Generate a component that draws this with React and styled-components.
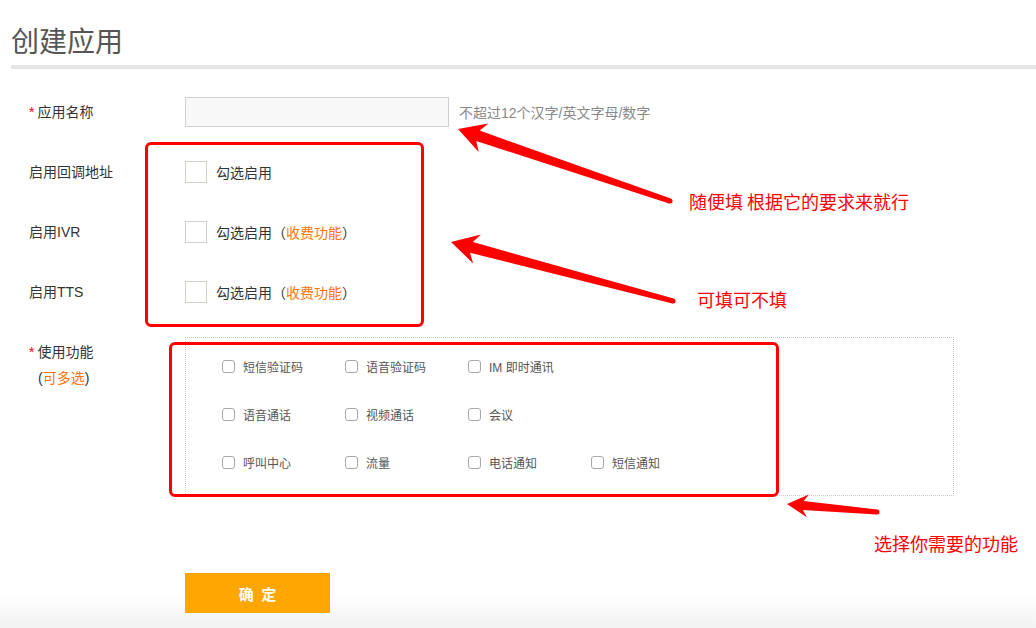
import React from "react";
import styled, { createGlobalStyle } from "styled-components";

const Global = createGlobalStyle`
  html, body { margin: 0; padding: 0; background: #fff; }
  body {
    font-family: "Liberation Sans", "Noto Sans CJK SC", sans-serif;
    color: #333;
  }
  * { box-sizing: border-box; }
`;

const Page = styled.div`
  position: relative;
  width: 1036px;
  min-height: 628px;
  overflow: hidden;
  padding-left: 11px;
  background: linear-gradient(to bottom, #fff 0, #fff 596px, #f1f1f1 628px);
`;

const Title = styled.h1`
  margin: 0;
  padding: 20px 0 0 0;
  height: 65px;
  font-family: "Noto Sans CJK SC", sans-serif;
  font-size: 28px;
  line-height: 40px;
  font-weight: 400;
  color: #555;
`;

const Divider = styled.div`
  height: 4px;
  background: #e5e5e5;
`;

const Form = styled.div`
  display: flex;
  flex-direction: column;
  gap: 30px;
  padding: 28px 0 0 18px;
`;

const Row = styled.div`
  display: grid;
  grid-template-columns: 156px 1fr;
  align-items: ${(p) => (p.$top ? "start" : "center")};
  min-height: 30px;
`;

const Label = styled.div`
  font-size: 14px;
  line-height: ${(p) => (p.$multi ? "26px" : "30px")};
  padding-top: ${(p) => (p.$multi ? "2px" : "0")};
  color: #333;
`;

const Star = styled.span`
  color: #f00;
  margin-right: 3px;
`;

const SubNote = styled.div`
  padding-left: 9px;
`;

const Orange = styled.span`
  color: #ff7410;
`;

const Control = styled.div`
  display: flex;
  align-items: center;
  gap: ${(p) => p.$gap || 10}px;
`;

const TextInput = styled.input`
  width: 264px;
  height: 30px;
  border: 1px solid #cfcfcf;
  background: #f8f8f8;
  outline: none;
  margin: 0;
`;

const Hint = styled.span`
  font-size: 14px;
  color: #888;
`;

const BigBox = styled.span`
  display: inline-block;
  width: 22px;
  height: 22px;
  border: 1px solid #d4d0ca;
  background: #fff;
`;

const CheckText = styled.span`
  font-size: 14px;
  color: #333;
`;

const FeatureBox = styled.div`
  width: 769px;
  height: 159px;
  border: 1px dotted #c8c8c8;
  padding: 16px 0 0 36px;
  display: grid;
  grid-template-columns: repeat(4, 123px);
  grid-auto-rows: 24px;
  row-gap: 24px;
`;

const Option = styled.label`
  display: flex;
  align-items: center;
  gap: 8px;
  font-size: 12px;
  color: #555;
  grid-column: ${(p) => p.$col};
`;

const SmallBox = styled.span`
  display: inline-block;
  width: 13px;
  height: 13px;
  border: 1px solid #a8a8a8;
  border-radius: 3px;
  background: #fff;
`;

const Actions = styled.div`
  padding: 77px 0 0 174px;
`;

const Submit = styled.button`
  width: 145px;
  height: 40px;
  border: 0;
  margin: 0;
  background: #ffa600;
  color: #fff;
  font-family: "Noto Sans CJK SC", sans-serif;
  font-size: 15px;
  font-weight: 700;
  letter-spacing: 2px;
  text-indent: 2px;
  cursor: pointer;
`;

const RedFrame = styled.div`
  position: absolute;
  left: ${(p) => p.$x}px;
  top: ${(p) => p.$y}px;
  width: ${(p) => p.$w}px;
  height: ${(p) => p.$h}px;
  border: 3px solid #f00;
  border-radius: 6px;
  pointer-events: none;
`;

const Note = styled.div`
  position: absolute;
  left: ${(p) => p.$x}px;
  top: ${(p) => p.$y}px;
  font-family: "Noto Sans CJK SC", sans-serif;
  font-size: 18px;
  line-height: 24px;
  color: #f00;
  white-space: nowrap;
`;

const Overlay = styled.svg`
  position: absolute;
  left: 0;
  top: 0;
  pointer-events: none;
`;

function arrowPts(tip, tail, headLen, headHalf, neckHalf, tailHalf) {
  const dx = tail[0] - tip[0];
  const dy = tail[1] - tip[1];
  const L = Math.hypot(dx, dy);
  const ux = dx / L, uy = dy / L;
  const nx = -uy, ny = ux;
  const P = (a, p) =>
    `${(tip[0] + ux * a + nx * p).toFixed(1)},${(tip[1] + uy * a + ny * p).toFixed(1)}`;
  return [
    P(0, 0),
    P(headLen, -headHalf),
    P(headLen * 0.78, -neckHalf),
    P(L, -tailHalf),
    P(L, tailHalf),
    P(headLen * 0.78, neckHalf),
    P(headLen, headHalf),
  ].join(" ");
}

const arrows = [
  { tip: [458, 129], tail: [670, 201], h: 27, hw: 15, nw: 5.5, tw: 2.5 },
  { tip: [451, 242], tail: [673, 301], h: 27, hw: 15, nw: 5.5, tw: 2.5 },
  { tip: [787, 504], tail: [877, 512], h: 21, hw: 11.5, nw: 4.5, tw: 2.5 },
];

const features = [
  ["短信验证码", "语音验证码", "IM 即时通讯"],
  ["语音通话", "视频通话", "会议"],
  ["呼叫中心", "流量", "电话通知", "短信通知"],
];

export default function App() {
  return (
    <>
      <Global />
      <Page>
        <Title>创建应用</Title>
        <Divider />
        <Form>
          <Row>
            <Label>
              <Star>*</Star>应用名称
            </Label>
            <Control>
              <TextInput type="text" />
              <Hint>不超过12个汉字/英文字母/数字</Hint>
            </Control>
          </Row>
          <Row>
            <Label>启用回调地址</Label>
            <Control $gap={9}>
              <BigBox />
              <CheckText>勾选启用</CheckText>
            </Control>
          </Row>
          <Row>
            <Label>启用IVR</Label>
            <Control $gap={9}>
              <BigBox />
              <CheckText>
                勾选启用（<Orange>收费功能</Orange>）
              </CheckText>
            </Control>
          </Row>
          <Row>
            <Label>启用TTS</Label>
            <Control $gap={9}>
              <BigBox />
              <CheckText>
                勾选启用（<Orange>收费功能</Orange>）
              </CheckText>
            </Control>
          </Row>
          <Row $top>
            <Label $multi>
              <div>
                <Star>*</Star>使用功能
              </div>
              <SubNote>
                (<Orange>可多选</Orange>)
              </SubNote>
            </Label>
            <FeatureBox>
              {features.map((row, r) =>
                row.map((f, c) => (
                  <Option key={`${r}-${c}`} $col={c + 1}>
                    <SmallBox />
                    {f}
                  </Option>
                ))
              )}
            </FeatureBox>
          </Row>
        </Form>
        <Actions>
          <Submit>确 定</Submit>
        </Actions>

        <RedFrame $x={145} $y={142} $w={279} $h={185} />
        <RedFrame $x={169} $y={342} $w={610} $h={155} />
        <Overlay width="1036" height="628" viewBox="0 0 1036 628">
          {arrows.map((a, i) => (
            <g key={i} fill="#f00">
              <polygon points={arrowPts(a.tip, a.tail, a.h, a.hw, a.nw, a.tw)} />
              <circle cx={a.tail[0]} cy={a.tail[1]} r={a.tw} />
            </g>
          ))}
        </Overlay>
        <Note $x={689} $y={189}>随便填 根据它的要求来就行</Note>
        <Note $x={697} $y={287}>可填可不填</Note>
        <Note $x={874} $y={531}>选择你需要的功能</Note>
      </Page>
    </>
  );
}
